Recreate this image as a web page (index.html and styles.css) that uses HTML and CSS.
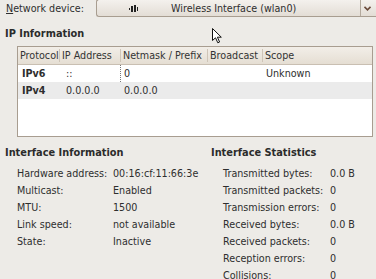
FILE: index.html
```html
<!DOCTYPE html>
<html lang="en">
<head>
    <meta charset="UTF-8">
    <title>Network Interface</title>
    <link rel="stylesheet" href="styles.css">
</head>
<body>
    <div class="window">
        <div class="device-row">
            <label class="device-label"><u>N</u>etwork device:</label>
            <div class="combo">
                <span class="combo-icon">
                    <svg width="9" height="7" viewBox="0 0 9 7">
                        <rect x="0" y="3" width="1" height="2" fill="#222"/>
                        <rect x="2" y="1" width="2" height="6" fill="#222"/>
                        <rect x="5" y="0" width="2" height="7" fill="#222"/>
                        <rect x="8" y="2" width="1" height="4" fill="#222"/>
                    </svg>
                </span>
                <span class="combo-text">Wireless Interface (wlan0)</span>
                <span class="combo-arrow">
                    <svg width="7" height="5" viewBox="0 0 7 5">
                        <path d="M0.5 0.8 L3.5 3.8 L6.5 0.8" fill="none" stroke="#6a4a3a" stroke-width="1.6"/>
                    </svg>
                </span>
            </div>
        </div>

        <h2 class="section-title">IP Information</h2>
        <div class="ip-table">
            <div class="ip-head">
                <div class="c-proto">Protocol</div>
                <div class="c-addr">IP Address</div>
                <div class="c-mask">Netmask / Prefix</div>
                <div class="c-bcast">Broadcast</div>
                <div class="c-scope">Scope</div>
            </div>
            <div class="ip-row">
                <div class="c-proto bold">IPv6</div>
                <div class="c-addr">::</div>
                <div class="c-mask focus">0</div>
                <div class="c-bcast"></div>
                <div class="c-scope">Unknown</div>
            </div>
            <div class="ip-row odd">
                <div class="c-proto bold">IPv4</div>
                <div class="c-addr">0.0.0.0</div>
                <div class="c-mask">0.0.0.0</div>
                <div class="c-bcast"></div>
                <div class="c-scope"></div>
            </div>
        </div>

        <div class="info">
            <div class="info-col">
                <h2 class="section-title">Interface Information</h2>
                <div class="info-grid left">
                    <span>Hardware address:</span><span>00:16:cf:11:66:3e</span>
                    <span>Multicast:</span><span>Enabled</span>
                    <span>MTU:</span><span>1500</span>
                    <span>Link speed:</span><span>not available</span>
                    <span>State:</span><span>Inactive</span>
                </div>
            </div>
            <div class="info-col">
                <h2 class="section-title">Interface Statistics</h2>
                <div class="info-grid right">
                    <span>Transmitted bytes:</span><span>0.0 B</span>
                    <span>Transmitted packets:</span><span>0</span>
                    <span>Transmission errors:</span><span>0</span>
                    <span>Received bytes:</span><span>0.0 B</span>
                    <span>Received packets:</span><span>0</span>
                    <span>Reception errors:</span><span>0</span>
                    <span>Collisions:</span><span>0</span>
                </div>
            </div>
        </div>

        <!-- mouse pointer over the window -->
        <svg class="pointer" width="11" height="17" viewBox="0 0 11 17">
            <path d="M0.5 0.5 L0.5 12.5 L3.5 9.8 L5.8 14.8 L7.6 14 L5.4 9.2 L9.3 9.2 Z" fill="#fff" stroke="#111" stroke-width="1"/>
        </svg>
    </div>
</body>
</html>
```

FILE: styles.css
```css
body {
    margin: 0;
    background: #edebe7;
    font-family: 'DejaVu Sans', sans-serif;
    font-size: 9.6px;
    color: #2e2e2e;
    overflow: hidden;
}

.window {
    position: relative;
    width: 376px;
    height: 279px;
    overflow: hidden;
}

.device-row {
    display: flex;
    align-items: center;
    height: 18px;
    margin-top: -1px;
}

.device-label {
    width: 90px;
    padding-left: 6px;
}

.combo {
    display: flex;
    align-items: center;
    width: 280px;
    height: 18px;
    border: 1px solid #a89d90;
    border-right: none;
    border-radius: 3px 0 0 3px;
    background: linear-gradient(#f4f1ed, #e3ddd5);
    box-sizing: border-box;
}

.combo-icon {
    display: flex;
    margin-left: 32px;
    margin-top: 1px;
}

.combo-text {
    margin-left: 33px;
    flex: 1;
}

.combo-arrow {
    display: flex;
    align-items: center;
    justify-content: center;
    width: 14px;
    height: 100%;
    border-left: 1px solid #b3a99d;
    box-sizing: border-box;
    margin-right: 2px;
}

.section-title {
    margin: 0;
    font-size: 9.8px;
    font-weight: bold;
    color: #2b2b2b;
    padding-left: 5px;
    line-height: 14px;
}

.device-row + .section-title {
    margin-top: 10px;
}

.ip-table {
    margin: 5px 0 0 17px;
    width: 356px;
    height: 91px;
    border: 1px solid #a89d90;
    background: #fff;
    box-sizing: border-box;
}

.ip-head,
.ip-row {
    display: grid;
    grid-template-columns: 41px 61px 87px 55px 1fr;
    height: 17px;
    align-items: center;
}

.ip-head {
    background: linear-gradient(#f2eee8, #e5ded3);
    border-bottom: 1px solid #c9bfb2;
    color: #333;
}

.ip-head div {
    padding-left: 2px;
    line-height: 13px;
    white-space: nowrap;
    overflow: hidden;
}

.ip-head div + div {
    border-left: 1px solid #cfc5b8;
    padding-left: 2px;
}

.ip-row div {
    padding-left: 4px;
    white-space: nowrap;
    line-height: 17px;
    height: 17px;
}

.ip-row .c-addr {
    padding-left: 7px;
}

.ip-row.odd {
    background: #ebebeb;
}

.ip-row .focus {
    border-left: 1px dotted #777;
    padding-left: 3px;
}

.bold {
    font-weight: bold;
}

.info {
    display: grid;
    grid-template-columns: 206px 1fr;
    margin-top: 9px;
}

.info-grid {
    display: grid;
    grid-auto-rows: 17px;
    align-items: center;
    margin-top: 5px;
    white-space: nowrap;
}

.info-grid.left {
    grid-template-columns: 96px 1fr;
    padding-left: 17px;
}

.info-grid.right {
    grid-template-columns: 107px 1fr;
    padding-left: 17px;
}

.pointer {
    position: absolute;
    left: 212px;
    top: 28px;
}
```
